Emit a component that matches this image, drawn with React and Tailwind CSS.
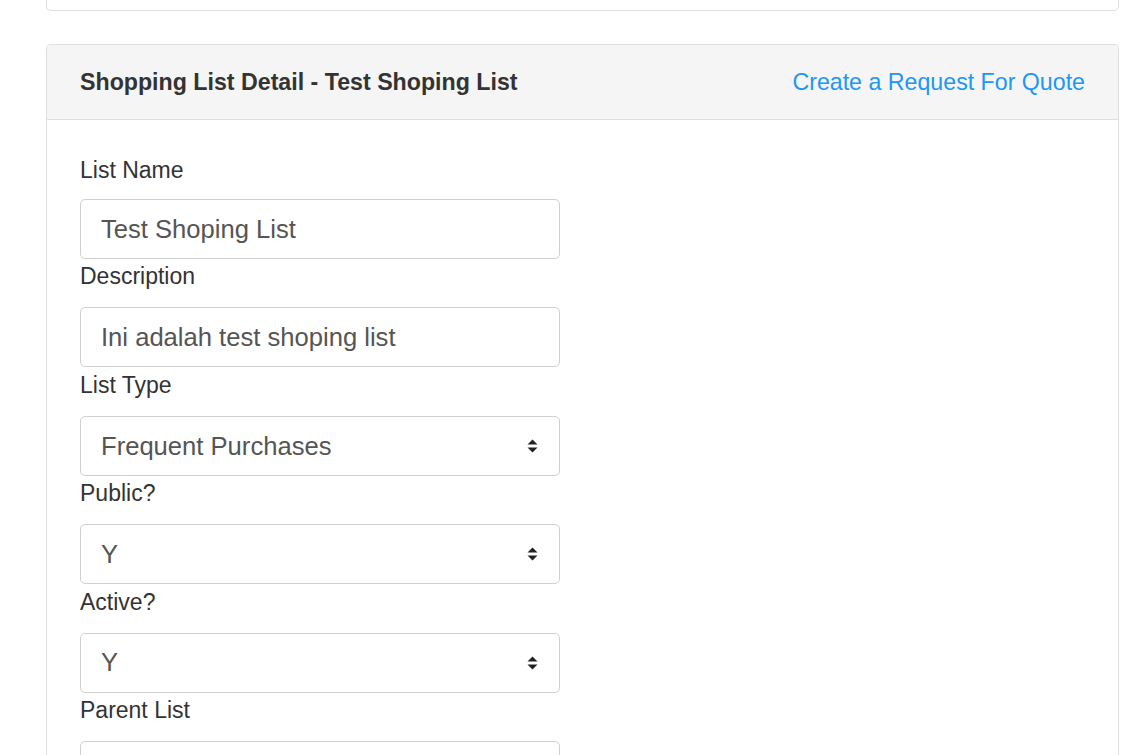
// App.jsx — Shopping list detail form (card with header + stacked fields)

const FIELDS = [
  { label: 'List Name', value: 'Test Shoping List', type: 'text' },
  { label: 'Description', value: 'Ini adalah test shoping list', type: 'text' },
  { label: 'List Type', value: 'Frequent Purchases', type: 'select' },
  { label: 'Public?', value: 'Y', type: 'select' },
  { label: 'Active?', value: 'Y', type: 'select' },
  { label: 'Parent List', value: '', type: 'select' },
]

function SortArrows() {
  return (
    <svg width="11" height="14" viewBox="0 0 11 14" className="shrink-0">
      <path d="M5.5 0.5 L10.5 5.5 L0.5 5.5 Z" fill="#222" />
      <path d="M5.5 13.5 L10.5 8.5 L0.5 8.5 Z" fill="#222" />
    </svg>
  )
}

function Field({ field, first }) {
  return (
    <div>
      <div
        className={`text-[23px] leading-[26px] text-[#333] ${
          first ? 'mb-[16px]' : 'mt-[4.4px] mb-[18px]'
        }`}
      >
        {field.label}
      </div>
      <div className="w-[480px] h-[60px] border border-[#cfcfcf] rounded-[5px] bg-white flex items-center justify-between pl-[20px] pr-[21px]">
        <span className="text-[25.6px] text-[#555] whitespace-nowrap">{field.value}</span>
        {field.type === 'select' && <SortArrows />}
      </div>
    </div>
  )
}

export default function App() {
  return (
    <div
      className="h-[755px] overflow-hidden bg-white pl-[46px] pr-[10px]"
      style={{ fontFamily: '"Liberation Sans", Arial, sans-serif' }}
    >
      {/* Card above, mostly scrolled out of view */}
      <div className="h-[11px] border border-t-0 border-[#dedede] rounded-b-[5px] bg-white" />

      {/* Detail card */}
      <div className="mt-[33px] border border-b-0 border-[#dedede] rounded-t-[5px] bg-white">
        <div className="h-[75px] bg-[#f5f5f5] border-b border-[#dedede] rounded-t-[5px] px-[33px] flex items-center justify-between">
          <span className="text-[23.2px] font-bold text-[#333]">
            Shopping List Detail - Test Shoping List
          </span>
          <a className="text-[23.2px] text-[#2196f3] cursor-pointer">Create a Request For Quote</a>
        </div>

        <div className="px-[33px] pt-[37px]">
          {FIELDS.map((f, i) => (
            <Field key={f.label} field={f} first={i === 0} />
          ))}
        </div>
      </div>
    </div>
  )
}
